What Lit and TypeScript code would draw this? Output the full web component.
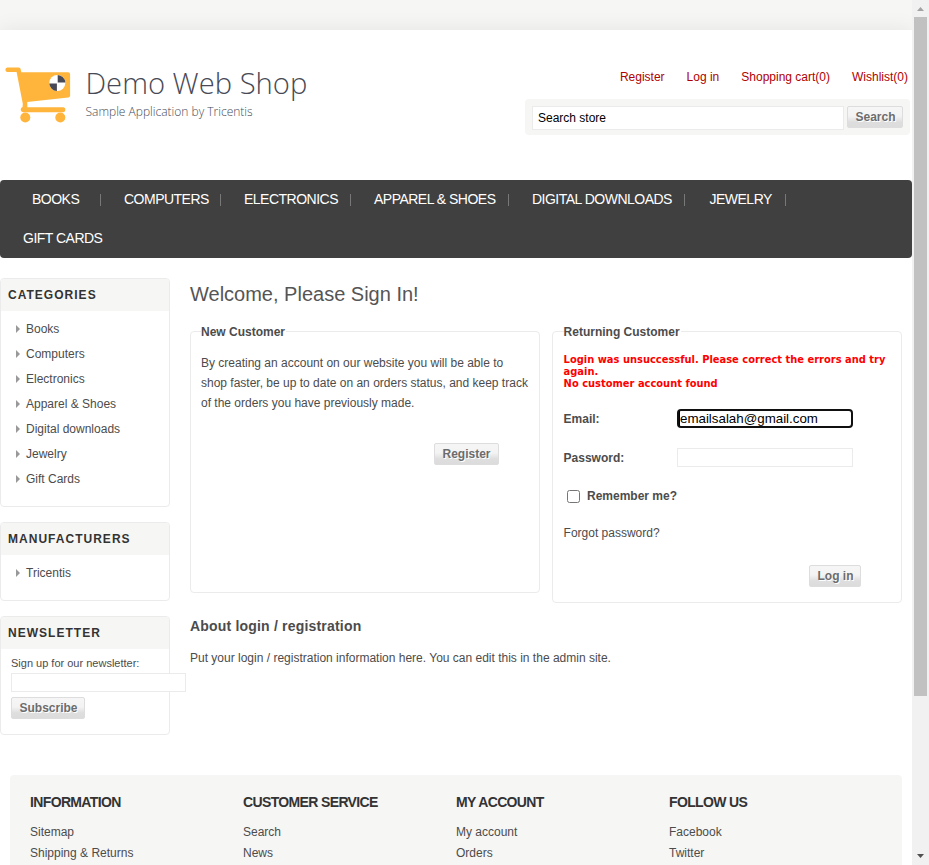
import { LitElement, html, css, svg } from "lit";
import { customElement } from "lit/decorators.js";

const accountLinks = ["Register", "Log in", "Shopping cart(0)", "Wishlist(0)"];
const menu = ["Books", "Computers", "Electronics", "Apparel & Shoes", "Digital downloads", "Jewelry", "Gift Cards"];
const footer = [
  { title: "Information", links: ["Sitemap", "Shipping & Returns"] },
  { title: "Customer service", links: ["Search", "News"] },
  { title: "My account", links: ["My account", "Orders"] },
  { title: "Follow us", links: ["Facebook", "Twitter"] },
];

const cart = svg`
  <g fill="#ffb53c">
    <path d="M7.500 67.500h11c1.200 0 2 .7 2.200 1.900l.6 2.900H68c1.300 0 2.100.8 2.100 2.100v21.200c0 1.100-.6 1.800-1.800 1.900L27.200 102l.2 5.300H63c3.200 0 3.200 4.900 0 4.900H23.600c-3.400 0-3.800-4.100-1-5.200l.2-3.200L16.600 72H7.500c-2.700 0-2.700-4.500 0-4.500z"/>
    <circle cx="25.300" cy="117.500" r="5"/><circle cx="60.300" cy="117.500" r="5"/>
  </g>
  <circle cx="57.300" cy="83" r="8" fill="#fff"/>
  <path fill="#474a56" d="M57.700 82.600V75a8 8 0 0 1 7.600 7.600zM56.900 83.400V91a8 8 0 0 1-7.600-7.600z"/>`;

@customElement("app-root")
export class AppRoot extends LitElement {
  static styles = css`
    :host { display: flex; width: 929px; height: 865px; overflow: hidden; background: #fff; font: 12px "Liberation Sans", Arial, sans-serif; color: #4c4c4c; }
    * { box-sizing: border-box; }
    ul, h1, h2, h3, p { margin: 0; padding: 0; list-style: none; }
    .page { width: 912px; flex: none; }
    .band { height: 30px; background: #f6f6f5; }
    .header { display: flex; height: 150px; background: #fff; box-shadow: 0 0 20px rgba(0, 0, 0, 0.08); }
    .logo { width: 320px; height: 110px; flex: none; display: block; }
    .name { font: 300 29.200px "Open Sans", sans-serif; fill: #474a56; }
    .tag { font: 300 12px "Open Sans", sans-serif; fill: #474a56; }
    .tools { margin-left: auto; width: 385px; margin-right: 2px; padding-top: 40px; }
    .account { display: flex; justify-content: flex-end; gap: 22px; height: 29px; line-height: 14px; color: #b10000; padding-right: 2px; }
    .search { display: flex; gap: 3px; height: 36px; padding: 7px 7px 0; background: #f6f6f5; border-radius: 4px; }
    .box { border: 1px solid #ebebeb; background: #fff; }
    .query { width: 312px; height: 24px; color: #000; line-height: 22px; padding-left: 5px; }
    .btn { display: block; height: 22px; border: 1px solid #ddd; border-radius: 2px; background: linear-gradient(#f6f6f6 0, #f3f3f3 45%, #dedede 75%, #dcdcdc); color: #6c6c6c; font-weight: bold; line-height: 20px; text-align: center; text-shadow: 1px 1px 0 #fff; padding-left: 1px; }
    .search .btn { width: 56px; }
    .menu { height: 78px; background: #404040; border-radius: 4px; color: #fff; font-size: 14px; letter-spacing: -0.510px; line-height: 39px; text-transform: uppercase; display: grid; grid-template-columns: 101px 120px 130px 158px 176px 101px; grid-auto-rows: 39px; }
    .menu li { padding-left: 23px; display: flex; align-items: center; justify-content: space-between; white-space: nowrap; }
    .menu li:first-child { padding-left: 32px; }
    .menu li:nth-child(6) { padding-left: 24.500px; }
    .menu li:not(:last-child)::after { content: ""; width: 1px; height: 12px; background: #787878; }
    .body { display: flex; padding-top: 20px; height: 517px; }
    .side { width: 170px; flex: none; margin-right: 20px; display: flex; flex-direction: column; gap: 15px; }
    .block { border: 1px solid #ebebeb; border-radius: 4px; height: 79px; }
    .block.cats { height: 229px; }
    .block.news { height: 119px; }
    .block h3 { height: 32px; background: #f6f6f5; font-size: 12px; line-height: 32px; letter-spacing: 1.020px; color: #333; padding-left: 7px; text-transform: uppercase; border-radius: 3px 3px 0 0; }
    .list { padding: 5px 0 0 15px; }
    .list li { height: 25px; line-height: 25px; padding-top: 1px; display: flex; align-items: center; gap: 6px; }
    .list li::before { content: ""; border: 4px solid transparent; border-left-color: #999; border-right-width: 0; margin-top: -1px; }
    .signup { padding: 7px 0 0 10px; font-size: 11px; line-height: 14px; }
    .signup .box { width: 175px; height: 19px; margin: 3px 0 5px; }
    .signup .btn { width: 74px; font-size: 12px; }
    .main { width: 712px; flex: none; }
    h1 { font-size: 20px; font-weight: normal; line-height: 24px; height: 53px; padding-top: 4px; color: #555; }
    .panels { display: flex; gap: 12px; }
    .panel { width: 350px; height: 262px; border: 1px solid #ebebeb; border-radius: 4px; padding: 0 10px; }
    .panel.ret { height: 272px; padding-left: 10.600px; }
    .panel h2 { font-size: 12px; line-height: 14px; height: 14px; margin-top: -7px; background: #fff; width: max-content; padding-right: 1px; color: #4c4c4c; }
    .intro { line-height: 20px; margin-top: 14px; white-space: nowrap; }
    .intro + .btn { width: 65px; margin: 30px 0 0 233px; padding-left: 0; }
    .error { margin-top: 15px; font: bold 9.920px/12px Verdana, "DejaVu Sans", sans-serif; color: #f00; white-space: nowrap; }
    .row { display: flex; font-weight: bold; line-height: 21px; height: 19px; }
    .row span { width: 113.400px; }
    .row .box { width: 176px; height: 19px; }
    .email { margin-top: 19px; }
    .pass { margin-top: 20px; }
    .row .focus { border: 2px solid #101010; border-radius: 4px; color: #000; font-weight: normal; font-size: 13.333px; line-height: 15px; }
    .focus i { display: block; border-left: 1px solid #000; height: 15px; font-style: normal; }
    .remember { margin: 20px 0 0 3.400px; gap: 7px; align-items: center; }
    .check { width: 13px; height: 13px; border: 1px solid #767676; border-radius: 2.500px; background: #fff; }
    .forgot { margin-top: 17px; line-height: 20px; }
    .ret .btn { width: 52px; margin: 22px 0 0 245.400px; }
    h2.about { font-size: 14px; letter-spacing: 0.190px; line-height: 18px; margin-top: 14px; color: #4c4c4c; }
    .note { line-height: 20px; margin-top: 13px; }
    .footer { margin-left: 10px; width: 892px; height: 90px; background: #f6f6f5; border-radius: 4px 4px 0 0; padding: 18px 20px 0; display: grid; grid-template-columns: repeat(4, 213px); }
    .footer h3 { font-size: 14px; letter-spacing: -0.640px; line-height: 18px; height: 29px; text-transform: uppercase; color: #333; }
    .footer li { line-height: 21px; }
    .bar { width: 17px; height: 865px; flex: none; background: #f1f1f1; display: flex; flex-direction: column; align-items: center; }
    .thumb { width: 13px; height: 679px; background: #c1c1c1; }
    .arrow { width: 17px; height: 17px; display: block; }
    .arrow:last-child { margin-top: auto; }
  `;

  render() {
    return html`
      <div class="page">
        <div class="band"></div>
        <div class="header">
          <svg class="logo" viewBox="0 30 320 110">${cart}
            <text class="name" x="85.500" y="94">Demo Web Shop</text>
            <text class="tag" x="85.500" y="116">Sample Application by Tricentis</text>
          </svg>
          <div class="tools">
            <div class="account">${accountLinks.map((l) => html`<span>${l}</span>`)}</div>
            <div class="search"><div class="box query">Search store</div><span class="btn">Search</span></div>
          </div>
        </div>
        <ul class="menu">${menu.map((m) => html`<li>${m}</li>`)}</ul>
        <div class="body">
          <div class="side">
            <div class="block cats"><h3>Categories</h3><ul class="list">${menu.map((m) => html`<li>${m}</li>`)}</ul></div>
            <div class="block"><h3>Manufacturers</h3><ul class="list"><li>Tricentis</li></ul></div>
            <div class="block news"><h3>Newsletter</h3>
              <div class="signup">Sign up for our newsletter:<div class="box"></div><span class="btn">Subscribe</span></div>
            </div>
          </div>
          <div class="main">
            <h1>Welcome, Please Sign In!</h1>
            <div class="panels">
              <div class="panel">
                <h2>New Customer</h2>
                <p class="intro">By creating an account on our website you will be able to<br />shop faster, be up to date on an orders status, and keep track<br />of the orders you have previously made.</p>
                <span class="btn">Register</span>
              </div>
              <div class="panel ret">
                <h2>Returning Customer</h2>
                <p class="error">Login was unsuccessful. Please correct the errors and try<br />again.<br />No customer account found</p>
                <div class="row email"><span>Email:</span><div class="box focus"><i>emailsalah@gmail.com</i></div></div>
                <div class="row pass"><span>Password:</span><div class="box"></div></div>
                <div class="row remember"><div class="check"></div>Remember me?</div>
                <p class="forgot">Forgot password?</p>
                <span class="btn">Log in</span>
              </div>
            </div>
            <h2 class="about">About login / registration</h2>
            <p class="note">Put your login / registration information here. You can edit this in the admin site.</p>
          </div>
        </div>
        <div class="footer">
          ${footer.map((c) => html`<div><h3>${c.title}</h3><ul>${c.links.map((l) => html`<li>${l}</li>`)}</ul></div>`)}
        </div>
      </div>
      <div class="bar">
        <svg class="arrow" viewBox="0 0 17 17"><path d="M5 11l3.500-4 3.500 4z" fill="#a3a3a3"/></svg>
        <div class="thumb"></div>
        <svg class="arrow" viewBox="0 0 17 17"><path d="M5 6l3.500 4L12 6z" fill="#505050"/></svg>
      </div>`;
  }
}
